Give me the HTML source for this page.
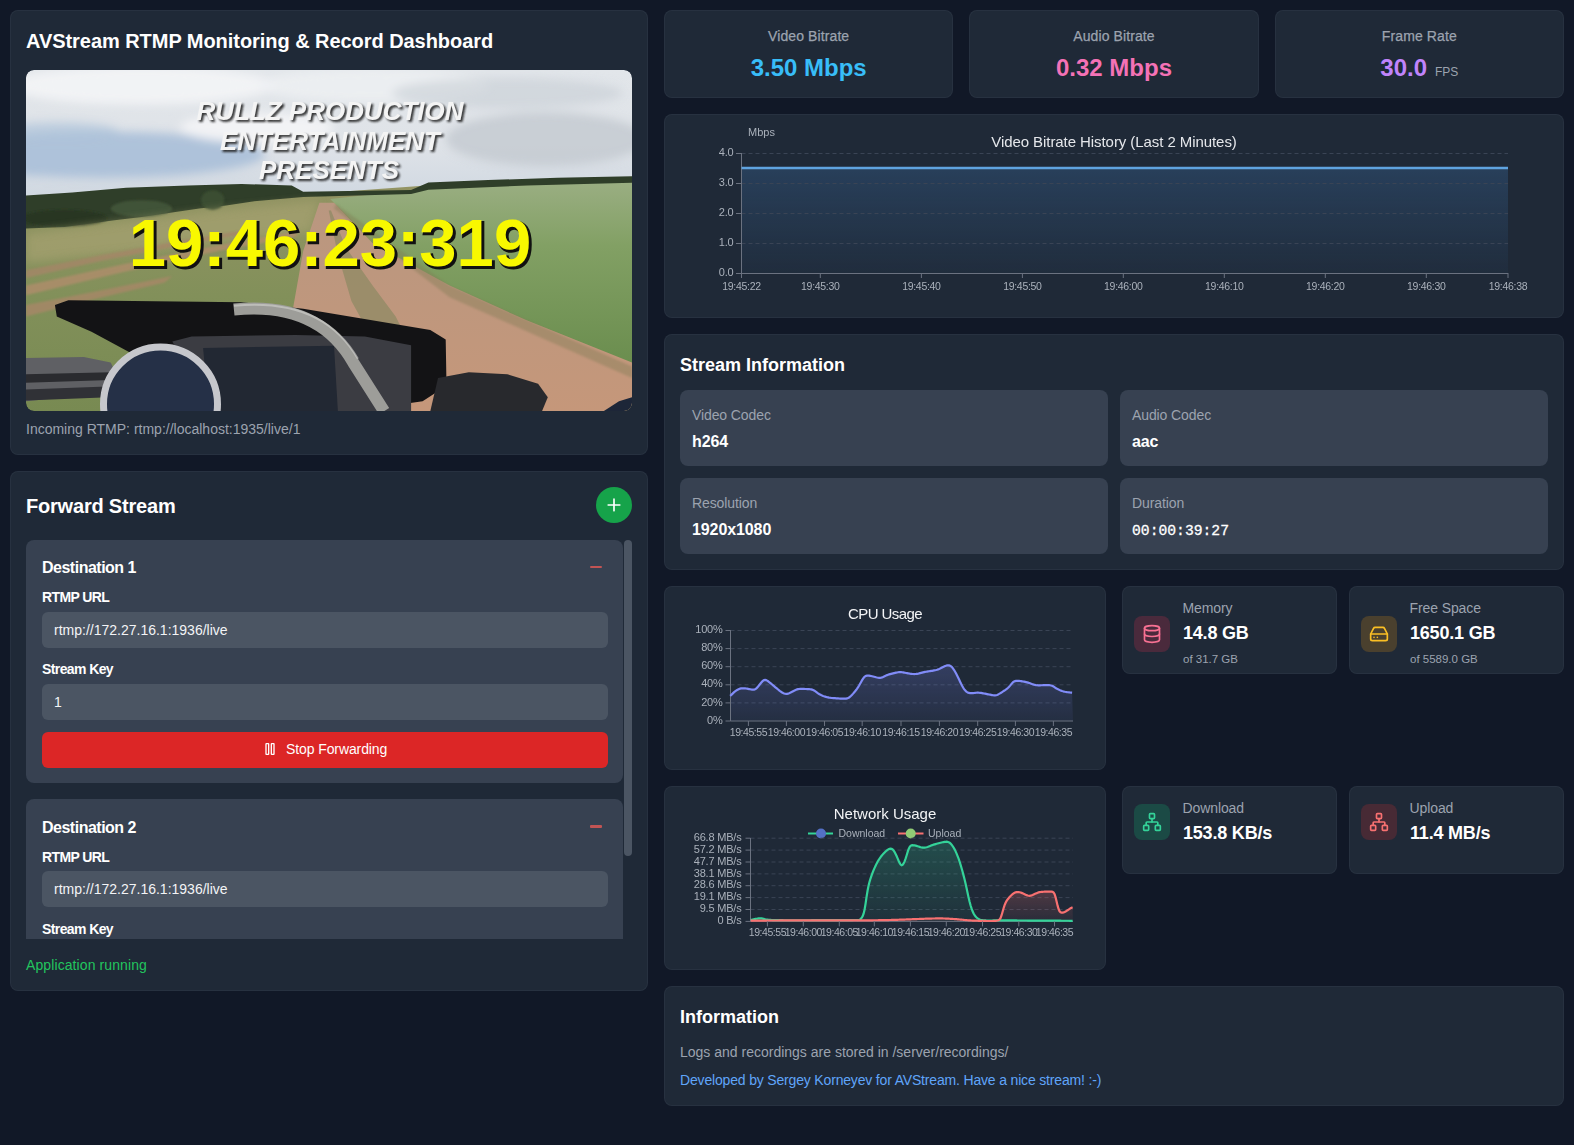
<!DOCTYPE html>
<html><head><meta charset="utf-8"><title>AVStream RTMP Monitoring &amp; Record Dashboard</title>
<style>
html,body{margin:0;padding:0;}
body{width:1574px;height:1145px;background:#111827;position:relative;overflow:hidden;font-family:'Liberation Sans', sans-serif;}
</style></head><body>
<div style="position:absolute;left:10px;top:10px;width:638px;height:445px;background:#1f2937;border-radius:8px;box-sizing:border-box;border:1px solid rgba(75,85,99,0.2);"></div>
<div style="position:absolute;left:10px;top:471px;width:638px;height:520px;background:#1f2937;border-radius:8px;box-sizing:border-box;border:1px solid rgba(75,85,99,0.2);"></div>
<div style="position:absolute;left:664.0px;top:10px;width:289.33px;height:88px;background:#1f2937;border-radius:8px;box-sizing:border-box;border:1px solid rgba(75,85,99,0.2);"></div>
<div style="position:absolute;left:969.33px;top:10px;width:289.33px;height:88px;background:#1f2937;border-radius:8px;box-sizing:border-box;border:1px solid rgba(75,85,99,0.2);"></div>
<div style="position:absolute;left:1274.67px;top:10px;width:289.33px;height:88px;background:#1f2937;border-radius:8px;box-sizing:border-box;border:1px solid rgba(75,85,99,0.2);"></div>
<div style="position:absolute;left:664px;top:114px;width:900px;height:204px;background:#1f2937;border-radius:8px;box-sizing:border-box;border:1px solid rgba(75,85,99,0.2);"></div>
<div style="position:absolute;left:664px;top:334px;width:900px;height:236px;background:#1f2937;border-radius:8px;box-sizing:border-box;border:1px solid rgba(75,85,99,0.2);"></div>
<div style="position:absolute;left:664px;top:586px;width:442px;height:184px;background:#1f2937;border-radius:8px;box-sizing:border-box;border:1px solid rgba(75,85,99,0.2);"></div>
<div style="position:absolute;left:1122px;top:586px;width:215px;height:88px;background:#1f2937;border-radius:8px;box-sizing:border-box;border:1px solid rgba(75,85,99,0.2);"></div>
<div style="position:absolute;left:1349px;top:586px;width:215px;height:88px;background:#1f2937;border-radius:8px;box-sizing:border-box;border:1px solid rgba(75,85,99,0.2);"></div>
<div style="position:absolute;left:664px;top:786px;width:442px;height:184px;background:#1f2937;border-radius:8px;box-sizing:border-box;border:1px solid rgba(75,85,99,0.2);"></div>
<div style="position:absolute;left:1122px;top:786px;width:215px;height:88px;background:#1f2937;border-radius:8px;box-sizing:border-box;border:1px solid rgba(75,85,99,0.2);"></div>
<div style="position:absolute;left:1349px;top:786px;width:215px;height:88px;background:#1f2937;border-radius:8px;box-sizing:border-box;border:1px solid rgba(75,85,99,0.2);"></div>
<div style="position:absolute;left:664px;top:986px;width:900px;height:120px;background:#1f2937;border-radius:8px;box-sizing:border-box;border:1px solid rgba(75,85,99,0.2);"></div>
<div style="position:absolute;top:31px;font-family:'Liberation Sans', sans-serif;font-size:20px;line-height:20px;font-weight:700;color:#ffffff;white-space:nowrap;letter-spacing:-0.05px;left:26px;">AVStream RTMP Monitoring &amp; Record Dashboard</div>
<svg style="position:absolute;left:26px;top:70px;border-radius:8px" width="606" height="341" viewBox="26 70 606 341" font-family="'Liberation Sans', sans-serif">
<defs>
<clipPath id="vclip"><rect x="26" y="70" width="606" height="341" rx="8" ry="8"/></clipPath>
<linearGradient id="sky" x1="0" y1="0" x2="0" y2="1">
 <stop offset="0" stop-color="#e2e6ea"/><stop offset="0.5" stop-color="#dfe3e8"/><stop offset="1" stop-color="#c9d3de"/></linearGradient>
<linearGradient id="fieldL" x1="0" y1="0" x2="0" y2="1">
 <stop offset="0" stop-color="#949464"/><stop offset="0.5" stop-color="#82905a"/><stop offset="1" stop-color="#788a52"/></linearGradient>
<linearGradient id="fieldR" x1="0" y1="0" x2="0" y2="1">
 <stop offset="0" stop-color="#9aae82"/><stop offset="0.35" stop-color="#82a064"/><stop offset="1" stop-color="#6a8d4e"/></linearGradient>
<linearGradient id="road" x1="0" y1="0" x2="0" y2="1">
 <stop offset="0" stop-color="#b99780"/><stop offset="1" stop-color="#c5977a"/></linearGradient>
<filter id="bl3" x="-30%" y="-30%" width="160%" height="160%"><feGaussianBlur stdDeviation="5"/></filter>
<filter id="bl1" x="-10%" y="-10%" width="120%" height="120%"><feGaussianBlur stdDeviation="1.2"/></filter>
<filter id="sh" x="-5%" y="-5%" width="110%" height="120%"><feGaussianBlur stdDeviation="0.8"/></filter>
</defs>
<g clip-path="url(#vclip)">
<rect x="26" y="70" width="606" height="150" fill="url(#sky)"/>
<g filter="url(#bl3)"><ellipse cx="103.01193685021178" cy="154.71313053523295" rx="161.72506738544473" ry="23.103581055063536" fill="#a9bfd8" opacity="0.9"/><ellipse cx="56.80477474008471" cy="131.60954948016942" rx="61.60954948016943" ry="9.626492106276473" fill="#aec3da" opacity="0.7"/><ellipse cx="141.51790527531767" cy="85.40238737004236" rx="134.77088948787062" ry="19.252984212552946" fill="#f3f4f6" opacity="0.9"/><ellipse cx="372.553715825953" cy="85.40238737004236" rx="115.51790527531767" ry="17.32768579129765" fill="#eef0f3" opacity="0.8"/><ellipse cx="545.8305737389295" cy="139.31074316519062" rx="100.11551790527533" ry="26.954177897574123" fill="#c3c9d0" opacity="0.8"/><ellipse cx="507.32460531382367" cy="93.10358105506353" rx="115.51790527531767" ry="15.402387370042357" fill="#c8ced5" opacity="0.6"/><ellipse cx="257.03581055063535" cy="127.75895263765884" rx="77.01193685021178" ry="15.402387370042357" fill="#f6f6f8" opacity="0.8"/></g>
<polygon points="26.0,224.0 295.5,195.1 426.5,185.5 632.1,179.7 632.1,411.2 26.0,411.2" fill="url(#fieldL)" />
<polygon points="330.2,199.0 426.5,188.6 632.1,181.7 632.1,366.5 526.6,322.2 449.6,287.6 384.1,251.0 336.0,204.8" fill="url(#fieldR)" />
<polygon points="26.0,195.5 72.2,192.4 126.1,187.8 187.7,185.5 241.6,184.0 291.7,185.5 303.2,191.7 411.1,190.1 428.4,182.4 488.1,180.1 557.4,177.8 632.1,176.3 632.1,182.8 526.6,185.5 428.4,189.8 411.1,194.0 303.2,197.1 257.0,200.9 226.2,205.5 199.3,208.6 141.5,217.1 114.6,220.2 64.5,227.1 26.0,228.6" fill="#2f3e29" />
<g filter="url(#bl1)"><ellipse cx="212.75394686176358" cy="200.1501732768579" rx="11.551790527531768" ry="10.011551790527532" fill="#3a4d30"/><ellipse cx="141.51790527531767" cy="208.6214863303812" rx="30.804774740084714" ry="8.471313053523296" fill="#46583c" opacity="0.8"/><ellipse cx="64.50596842510589" cy="218.2479784366577" rx="42.35656526761648" ry="8.471313053523296" fill="#253421" opacity="0.8"/></g>
<g filter="url(#bl3)" opacity="0.75"><polygon points="26.0,233.7 218.5,210.5 318.6,200.9 310.9,231.7 141.5,251.0 26.0,262.5" fill="#a4a070" /></g>
<g filter="url(#bl1)" opacity="0.8"><polygon points="26.0,285.6 122.3,264.5 218.5,245.2 295.5,231.7 297.5,236.3 218.5,251.0 122.3,272.2 26.0,295.3" fill="#b08d6c" /><polygon points="26.0,270.2 103.0,254.8 187.7,239.4 257.0,228.6 257.0,231.7 187.7,244.0 103.0,260.6 26.0,277.9" fill="#a58668" /><polygon points="26.0,304.9 95.3,291.4 172.3,276.0 164.6,282.6 95.3,299.1 26.0,316.4" fill="#a88768" /></g>
<polygon points="319.4,202.8 334.0,202.8 372.6,243.3 449.6,285.6 526.6,320.3 632.1,362.6 632.1,411.2 287.8,411.2 290.9,320.3 303.2,251.0" fill="url(#road)" />
<g opacity="0.75"><polygon points="328.7,210.5 331.0,210.5 345.6,247.1 372.6,285.6 395.7,316.4 411.1,347.2 372.6,339.5 351.4,301.0 337.9,254.8" fill="#8f8a64" /></g>
<g opacity="0.4" filter="url(#bl1)"><polygon points="336.0,204.0 449.6,285.6 632.1,366.5 632.1,378.0 449.6,297.2 334.0,208.6" fill="#807c54" /></g>
<polygon points="54.9,304.9 68.4,300.3 241.6,302.2 303.2,308.7 430.3,329.9 445.7,339.5 446.5,385.7 422.6,401.2 353.3,411.2 153.1,411.2 141.5,358.8 91.5,331.8 56.8,316.4" fill="#131315" />
<polygon points="26.0,358.0 83.8,356.9 110.7,362.6 118.4,378.0 110.7,393.5 83.8,395.4 26.0,401.2" fill="#5f6064" />
<polygon points="26.0,374.2 110.7,372.3 110.7,380.0 26.0,382.7" fill="#2a2b2f" />
<polygon points="26.0,389.6 106.9,386.5 108.8,397.3 26.0,400.4" fill="#303136" />
<polygon points="172.3,341.5 191.6,336.5 295.5,334.9 364.9,336.5 411.1,345.3 411.1,411.2 210.8,411.2" fill="#3b3c42" />
<polygon points="203.1,348.0 334.0,345.7 337.9,411.2 208.9,411.2" fill="#222833" />
<ellipse cx="160.5" cy="404" rx="57" ry="57" fill="#253047" stroke="#c6c7cc" stroke-width="7"/>
<path d="M233.9,309.5 Q318.6,301.0 353.3,362.6 L384.1,411.2" fill="none" stroke="#9d9d99" stroke-width="12"/>
<path d="M233.9,305.7 Q322.5,297.2 357.9,358.8" fill="none" stroke="#d2d2ce" stroke-width="2" opacity="0.6"/>
<polygon points="438.0,378.0 468.8,372.3 507.3,374.2 538.1,383.8 547.8,397.3 542.0,411.2 430.3,411.2" fill="#28292d" />
<polygon points="603.6,411.2 619.0,401.2 632.1,397.3 632.1,411.2" fill="#1d2638" />
<text x="332.0" y="121.5" font-size="26" font-weight="700" font-style="italic" fill="#1a1a1a" text-anchor="middle" filter="url(#sh)" opacity="0.9">RULLZ PRODUCTION</text><text x="330" y="119.5" font-size="26" font-weight="700" font-style="italic" fill="#f4f4f4" text-anchor="middle">RULLZ PRODUCTION</text>
<text x="332.0" y="151.5" font-size="26" font-weight="700" font-style="italic" fill="#1a1a1a" text-anchor="middle" filter="url(#sh)" opacity="0.9">ENTERTAINMENT</text><text x="330" y="149.5" font-size="26" font-weight="700" font-style="italic" fill="#f4f4f4" text-anchor="middle">ENTERTAINMENT</text>
<text x="331.0" y="181.0" font-size="26" font-weight="700" font-style="italic" fill="#1a1a1a" text-anchor="middle" filter="url(#sh)" opacity="0.9">PRESENTS</text><text x="329" y="179" font-size="26" font-weight="700" font-style="italic" fill="#f4f4f4" text-anchor="middle">PRESENTS</text>
<text x="332" y="268" font-size="67" font-weight="700" fill="#111" text-anchor="middle" stroke="#111" stroke-width="2">19:46:23:319</text>
<text x="330" y="266" font-size="67" font-weight="700" fill="#f8f800" text-anchor="middle">19:46:23:319</text>
</g></svg>
<div style="position:absolute;top:422px;font-family:'Liberation Sans', sans-serif;font-size:14px;line-height:14px;font-weight:400;color:#9ca3af;white-space:nowrap;left:26px;">Incoming RTMP: rtmp://localhost:1935/live/1</div>
<div style="position:absolute;top:496px;font-family:'Liberation Sans', sans-serif;font-size:20px;line-height:20px;font-weight:700;color:#ffffff;white-space:nowrap;letter-spacing:-0.2px;left:26px;">Forward Stream</div>
<div style="position:absolute;left:596px;top:487px;width:36px;height:36px;border-radius:50%;background:#16a34a;"></div>
<svg style="position:absolute;left:604px;top:495px" width="20" height="20" viewBox="0 0 24 24" fill="none" stroke="#fff" stroke-width="2" stroke-linecap="round"><path d="M5 12h14M12 5v14"/></svg>
<div style="position:absolute;left:26px;top:539px;width:606px;height:400px;overflow:hidden;">
<div style="position:absolute;left:0px;top:0.5px;width:597px;height:243px;background:#374151;border-radius:8px;"></div>
<div style="position:absolute;left:16px;top:21.0px;font-family:'Liberation Sans', sans-serif;font-size:16px;line-height:16px;font-weight:700;color:#ffffff;white-space:nowrap;letter-spacing:-0.5px">Destination 1</div>
<div style="position:absolute;left:564px;top:26.5px;width:12px;height:2.5px;background:#c25454;border-radius:1px;"></div>
<div style="position:absolute;left:16px;top:51.0px;font-family:'Liberation Sans', sans-serif;font-size:14px;line-height:14px;font-weight:700;color:#ffffff;white-space:nowrap;letter-spacing:-0.6px">RTMP URL</div>
<div style="position:absolute;left:16px;top:72.5px;width:566px;height:36px;background:#4b5563;border-radius:6px;"></div>
<div style="position:absolute;left:28px;top:83.5px;font-family:'Liberation Sans', sans-serif;font-size:14px;line-height:14px;font-weight:400;color:#f3f4f6;white-space:nowrap;letter-spacing:0px">rtmp://172.27.16.1:1936/live</div>
<div style="position:absolute;left:16px;top:123.0px;font-family:'Liberation Sans', sans-serif;font-size:14px;line-height:14px;font-weight:700;color:#ffffff;white-space:nowrap;letter-spacing:-0.6px">Stream Key</div>
<div style="position:absolute;left:16px;top:144.5px;width:566px;height:36px;background:#4b5563;border-radius:6px;"></div>
<div style="position:absolute;left:28px;top:155.5px;font-family:'Liberation Sans', sans-serif;font-size:14px;line-height:14px;font-weight:400;color:#f3f4f6;white-space:nowrap;letter-spacing:0px">1</div>
<div style="position:absolute;left:16px;top:192.5px;width:566px;height:36px;background:#dc2626;border-radius:6px;"></div>
<svg style="position:absolute;left:236px;top:202.0px" width="16" height="16" viewBox="0 0 24 24" fill="none" stroke="#fff" stroke-width="2" stroke-linecap="round" stroke-linejoin="round"><rect x="6" y="4" width="4" height="16" rx="0.5"/><rect x="14" y="4" width="4" height="16" rx="0.5"/></svg>
<div style="position:absolute;left:260px;top:203.0px;font-family:'Liberation Sans', sans-serif;font-size:14px;line-height:14px;font-weight:400;color:#fff;white-space:nowrap;letter-spacing:-0.1px">Stop Forwarding</div>
<div style="position:absolute;left:0px;top:260px;width:597px;height:243px;background:#374151;border-radius:8px;"></div>
<div style="position:absolute;left:16px;top:280.5px;font-family:'Liberation Sans', sans-serif;font-size:16px;line-height:16px;font-weight:700;color:#ffffff;white-space:nowrap;letter-spacing:-0.5px">Destination 2</div>
<div style="position:absolute;left:564px;top:286px;width:12px;height:2.5px;background:#c25454;border-radius:1px;"></div>
<div style="position:absolute;left:16px;top:310.5px;font-family:'Liberation Sans', sans-serif;font-size:14px;line-height:14px;font-weight:700;color:#ffffff;white-space:nowrap;letter-spacing:-0.6px">RTMP URL</div>
<div style="position:absolute;left:16px;top:332px;width:566px;height:36px;background:#4b5563;border-radius:6px;"></div>
<div style="position:absolute;left:28px;top:343px;font-family:'Liberation Sans', sans-serif;font-size:14px;line-height:14px;font-weight:400;color:#f3f4f6;white-space:nowrap;letter-spacing:0px">rtmp://172.27.16.1:1936/live</div>
<div style="position:absolute;left:16px;top:382.5px;font-family:'Liberation Sans', sans-serif;font-size:14px;line-height:14px;font-weight:700;color:#ffffff;white-space:nowrap;letter-spacing:-0.6px">Stream Key</div>
<div style="position:absolute;left:16px;top:404px;width:566px;height:36px;background:#4b5563;border-radius:6px;"></div>
<div style="position:absolute;left:28px;top:415px;font-family:'Liberation Sans', sans-serif;font-size:14px;line-height:14px;font-weight:400;color:#f3f4f6;white-space:nowrap;letter-spacing:0px">1</div>
<div style="position:absolute;left:16px;top:452px;width:566px;height:36px;background:#dc2626;border-radius:6px;"></div>
<svg style="position:absolute;left:236px;top:461.5px" width="16" height="16" viewBox="0 0 24 24" fill="none" stroke="#fff" stroke-width="2" stroke-linecap="round" stroke-linejoin="round"><rect x="6" y="4" width="4" height="16" rx="0.5"/><rect x="14" y="4" width="4" height="16" rx="0.5"/></svg>
<div style="position:absolute;left:260px;top:462.5px;font-family:'Liberation Sans', sans-serif;font-size:14px;line-height:14px;font-weight:400;color:#fff;white-space:nowrap;letter-spacing:-0.1px">Stop Forwarding</div>
<div style="position:absolute;left:598px;top:0.5px;width:8px;height:316px;border-radius:4px;background:#4b5563;"></div>
</div>
<div style="position:absolute;top:958px;font-family:'Liberation Sans', sans-serif;font-size:14px;line-height:14px;font-weight:400;color:#22c55e;white-space:nowrap;letter-spacing:0.1px;left:26px;">Application running</div>
<div style="position:absolute;top:29px;font-family:'Liberation Sans', sans-serif;font-size:14px;line-height:14px;font-weight:500;color:#9ca3af;white-space:nowrap;letter-spacing:0.1px;left:708.6665px;width:200px;text-align:center;-webkit-text-stroke:0.25px #9ca3af;">Video Bitrate</div>
<div style="position:absolute;top:29px;font-family:'Liberation Sans', sans-serif;font-size:14px;line-height:14px;font-weight:500;color:#9ca3af;white-space:nowrap;letter-spacing:0.1px;left:1013.9995000000001px;width:200px;text-align:center;-webkit-text-stroke:0.25px #9ca3af;">Audio Bitrate</div>
<div style="position:absolute;top:29px;font-family:'Liberation Sans', sans-serif;font-size:14px;line-height:14px;font-weight:500;color:#9ca3af;white-space:nowrap;letter-spacing:0.1px;left:1319.3325000000002px;width:200px;text-align:center;-webkit-text-stroke:0.25px #9ca3af;">Frame Rate</div>
<div style="position:absolute;top:56px;font-family:'Liberation Sans', sans-serif;font-size:24px;line-height:24px;font-weight:700;color:#38bdf8;white-space:nowrap;left:678.6665px;width:260px;text-align:center;">3.50 Mbps</div>
<div style="position:absolute;top:56px;font-family:'Liberation Sans', sans-serif;font-size:24px;line-height:24px;font-weight:700;color:#f472b6;white-space:nowrap;left:983.9995000000001px;width:260px;text-align:center;">0.32 Mbps</div>
<div style="position:absolute;left:1289.3325000000002px;top:56px;width:260px;text-align:center;white-space:nowrap;font-family:'Liberation Sans', sans-serif;line-height:24px"><span style="font-size:24px;font-weight:700;color:#c084fc">30.0</span><span style="font-size:12px;color:#9ca3af;margin-left:8px">FPS</span></div>
<div style="position:absolute;top:356px;font-family:'Liberation Sans', sans-serif;font-size:18px;line-height:18px;font-weight:700;color:#ffffff;white-space:nowrap;left:680px;">Stream Information</div>
<div style="position:absolute;left:680px;top:390px;width:428px;height:76px;background:#374151;border-radius:8px;"></div>
<div style="position:absolute;top:408px;font-family:'Liberation Sans', sans-serif;font-size:14px;line-height:14px;font-weight:400;color:#9ca3af;white-space:nowrap;letter-spacing:-0.1px;left:692px;">Video Codec</div>
<div style="position:absolute;top:434px;font-family:'Liberation Sans', sans-serif;font-size:16px;line-height:16px;font-weight:700;color:#ffffff;white-space:nowrap;letter-spacing:-0.1px;left:692px;">h264</div>
<div style="position:absolute;left:1120px;top:390px;width:428px;height:76px;background:#374151;border-radius:8px;"></div>
<div style="position:absolute;top:408px;font-family:'Liberation Sans', sans-serif;font-size:14px;line-height:14px;font-weight:400;color:#9ca3af;white-space:nowrap;letter-spacing:-0.1px;left:1132px;">Audio Codec</div>
<div style="position:absolute;top:434px;font-family:'Liberation Sans', sans-serif;font-size:16px;line-height:16px;font-weight:700;color:#ffffff;white-space:nowrap;letter-spacing:-0.1px;left:1132px;">aac</div>
<div style="position:absolute;left:680px;top:478px;width:428px;height:76px;background:#374151;border-radius:8px;"></div>
<div style="position:absolute;top:496px;font-family:'Liberation Sans', sans-serif;font-size:14px;line-height:14px;font-weight:400;color:#9ca3af;white-space:nowrap;letter-spacing:-0.1px;left:692px;">Resolution</div>
<div style="position:absolute;top:522px;font-family:'Liberation Sans', sans-serif;font-size:16px;line-height:16px;font-weight:700;color:#ffffff;white-space:nowrap;letter-spacing:-0.1px;left:692px;">1920x1080</div>
<div style="position:absolute;left:1120px;top:478px;width:428px;height:76px;background:#374151;border-radius:8px;"></div>
<div style="position:absolute;top:496px;font-family:'Liberation Sans', sans-serif;font-size:14px;line-height:14px;font-weight:400;color:#9ca3af;white-space:nowrap;letter-spacing:-0.1px;left:1132px;">Duration</div>
<div style="position:absolute;top:524px;font-family:'Liberation Mono', monospace;font-size:14.7px;line-height:14.7px;font-weight:400;color:#ffffff;white-space:nowrap;left:1132px;-webkit-text-stroke:0.3px #fff;">00:00:39:27</div>
<div style="position:absolute;top:1008px;font-family:'Liberation Sans', sans-serif;font-size:18px;line-height:18px;font-weight:700;color:#ffffff;white-space:nowrap;left:680px;">Information</div>
<div style="position:absolute;top:1045px;font-family:'Liberation Sans', sans-serif;font-size:14px;line-height:14px;font-weight:400;color:#9ca3af;white-space:nowrap;left:680px;">Logs and recordings are stored in /server/recordings/</div>
<div style="position:absolute;top:1073px;font-family:'Liberation Sans', sans-serif;font-size:14px;line-height:14px;font-weight:400;color:#60a5fa;white-space:nowrap;letter-spacing:-0.17px;left:680px;">Developed by Sergey Korneyev for AVStream. Have a nice stream! :-)</div>
<div style="position:absolute;left:1134px;top:616px;width:36px;height:36px;background:#4a2a3c;border-radius:8px;"></div>
<svg style="position:absolute;left:1142px;top:624px" width="20" height="20" viewBox="0 0 24 24" fill="none" stroke="#f87193" stroke-width="2" stroke-linecap="round" stroke-linejoin="round"><ellipse cx="12" cy="5" rx="9" ry="3"/><path d="M3 5V19A9 3 0 0 0 21 19V5"/><path d="M3 12A9 3 0 0 0 21 12"/></svg>
<div style="position:absolute;top:601px;font-family:'Liberation Sans', sans-serif;font-size:14px;line-height:14px;font-weight:400;color:#9ca3af;white-space:nowrap;letter-spacing:-0.1px;left:1182.5px;">Memory</div>
<div style="position:absolute;top:623.6px;font-family:'Liberation Sans', sans-serif;font-size:18px;line-height:18px;font-weight:700;color:#ffffff;white-space:nowrap;letter-spacing:-0.2px;left:1183px;">14.8 GB</div>
<div style="position:absolute;top:654px;font-family:'Liberation Sans', sans-serif;font-size:11.5px;line-height:11.5px;font-weight:400;color:#9ca3af;white-space:nowrap;left:1183px;">of 31.7 GB</div>
<div style="position:absolute;left:1361px;top:616px;width:36px;height:36px;background:#4a402e;border-radius:8px;"></div>
<svg style="position:absolute;left:1369px;top:624px" width="20" height="20" viewBox="0 0 24 24" fill="none" stroke="#fbbf24" stroke-width="2" stroke-linecap="round" stroke-linejoin="round"><line x1="22" y1="12" x2="2" y2="12"/><path d="M5.45 5.11 2 12v6a2 2 0 0 0 2 2h16a2 2 0 0 0 2-2v-6l-3.45-6.89A2 2 0 0 0 16.76 4H7.24a2 2 0 0 0-1.79 1.11z"/><line x1="6" y1="16" x2="6.01" y2="16"/><line x1="10" y1="16" x2="10.01" y2="16"/></svg>
<div style="position:absolute;top:601px;font-family:'Liberation Sans', sans-serif;font-size:14px;line-height:14px;font-weight:400;color:#9ca3af;white-space:nowrap;letter-spacing:-0.1px;left:1409.5px;">Free Space</div>
<div style="position:absolute;top:623.6px;font-family:'Liberation Sans', sans-serif;font-size:18px;line-height:18px;font-weight:700;color:#ffffff;white-space:nowrap;letter-spacing:-0.2px;left:1410px;">1650.1 GB</div>
<div style="position:absolute;top:654px;font-family:'Liberation Sans', sans-serif;font-size:11.5px;line-height:11.5px;font-weight:400;color:#9ca3af;white-space:nowrap;left:1410px;">of 5589.0 GB</div>
<div style="position:absolute;left:1134px;top:804px;width:36px;height:36px;background:#1b4a45;border-radius:8px;"></div>
<svg style="position:absolute;left:1142px;top:812px" width="20" height="20" viewBox="0 0 24 24" fill="none" stroke="#34d399" stroke-width="2" stroke-linecap="round" stroke-linejoin="round"><rect x="16" y="16" width="6" height="6" rx="1"/><rect x="2" y="16" width="6" height="6" rx="1"/><rect x="9" y="2" width="6" height="6" rx="1"/><path d="M5 16v-3a1 1 0 0 1 1-1h12a1 1 0 0 1 1 1v3"/><path d="M12 12V8"/></svg>
<div style="position:absolute;top:801px;font-family:'Liberation Sans', sans-serif;font-size:14px;line-height:14px;font-weight:400;color:#9ca3af;white-space:nowrap;letter-spacing:-0.1px;left:1182.5px;">Download</div>
<div style="position:absolute;top:823.6px;font-family:'Liberation Sans', sans-serif;font-size:18px;line-height:18px;font-weight:700;color:#ffffff;white-space:nowrap;letter-spacing:-0.2px;left:1183px;">153.8 KB/s</div>
<div style="position:absolute;left:1361px;top:804px;width:36px;height:36px;background:#472a35;border-radius:8px;"></div>
<svg style="position:absolute;left:1369px;top:812px" width="20" height="20" viewBox="0 0 24 24" fill="none" stroke="#f87171" stroke-width="2" stroke-linecap="round" stroke-linejoin="round"><rect x="16" y="16" width="6" height="6" rx="1"/><rect x="2" y="16" width="6" height="6" rx="1"/><rect x="9" y="2" width="6" height="6" rx="1"/><path d="M5 16v-3a1 1 0 0 1 1-1h12a1 1 0 0 1 1 1v3"/><path d="M12 12V8"/></svg>
<div style="position:absolute;top:801px;font-family:'Liberation Sans', sans-serif;font-size:14px;line-height:14px;font-weight:400;color:#9ca3af;white-space:nowrap;letter-spacing:-0.1px;left:1409.5px;">Upload</div>
<div style="position:absolute;top:823.6px;font-family:'Liberation Sans', sans-serif;font-size:18px;line-height:18px;font-weight:700;color:#ffffff;white-space:nowrap;letter-spacing:-0.2px;left:1410px;">11.4 MB/s</div>
<svg style="position:absolute;left:0;top:0" width="1574" height="1145" viewBox="0 0 1574 1145" font-family="'Liberation Sans', sans-serif">
<defs><linearGradient id="gb" x1="0" y1="0" x2="0" y2="1"><stop offset="0" stop-color="#4a90d9" stop-opacity="0.22"/><stop offset="1" stop-color="#4a90d9" stop-opacity="0.04"/></linearGradient><linearGradient id="gc" x1="0" y1="0" x2="0" y2="1"><stop offset="0" stop-color="#818cf8" stop-opacity="0.22"/><stop offset="1" stop-color="#818cf8" stop-opacity="0.06"/></linearGradient><linearGradient id="gd" x1="0" y1="0" x2="0" y2="1"><stop offset="0" stop-color="#34d399" stop-opacity="0.22"/><stop offset="1" stop-color="#34d399" stop-opacity="0.05"/></linearGradient><linearGradient id="gu" x1="0" y1="0" x2="0" y2="1"><stop offset="0" stop-color="#f87171" stop-opacity="0.22"/><stop offset="1" stop-color="#f87171" stop-opacity="0.05"/></linearGradient></defs>
<text x="1114" y="147" font-size="15" fill="#e5e7eb" text-anchor="middle" font-weight="400" letter-spacing="-0.07">Video Bitrate History (Last 2 Minutes)</text>
<text x="748" y="135.5" font-size="11" fill="#aab1bb" text-anchor="start" font-weight="400" letter-spacing="0">Mbps</text>
<path d="M741.5,168 H1508 V273 H741.5 Z" fill="url(#gb)"/>
<line x1="741.5" y1="153.5" x2="1508" y2="153.5" stroke="#3a4455" stroke-dasharray="4 3"/>
<line x1="741.5" y1="183.5" x2="1508" y2="183.5" stroke="#3a4455" stroke-dasharray="4 3"/>
<line x1="741.5" y1="213.5" x2="1508" y2="213.5" stroke="#3a4455" stroke-dasharray="4 3"/>
<line x1="741.5" y1="243.5" x2="1508" y2="243.5" stroke="#3a4455" stroke-dasharray="4 3"/>
<line x1="736" y1="153.5" x2="741.5" y2="153.5" stroke="#6b7280"/>
<text x="733.5" y="156" font-size="11" fill="#aab1bb" text-anchor="end" font-weight="400" letter-spacing="-0.2">4.0</text>
<line x1="736" y1="183.5" x2="741.5" y2="183.5" stroke="#6b7280"/>
<text x="733.5" y="186" font-size="11" fill="#aab1bb" text-anchor="end" font-weight="400" letter-spacing="-0.2">3.0</text>
<line x1="736" y1="213.5" x2="741.5" y2="213.5" stroke="#6b7280"/>
<text x="733.5" y="216" font-size="11" fill="#aab1bb" text-anchor="end" font-weight="400" letter-spacing="-0.2">2.0</text>
<line x1="736" y1="243.5" x2="741.5" y2="243.5" stroke="#6b7280"/>
<text x="733.5" y="246" font-size="11" fill="#aab1bb" text-anchor="end" font-weight="400" letter-spacing="-0.2">1.0</text>
<line x1="736" y1="273.5" x2="741.5" y2="273.5" stroke="#6b7280"/>
<text x="733.5" y="276" font-size="11" fill="#aab1bb" text-anchor="end" font-weight="400" letter-spacing="-0.2">0.0</text>
<line x1="741.5" y1="153" x2="741.5" y2="273" stroke="#6b7280"/>
<line x1="741.5" y1="273.5" x2="1508" y2="273.5" stroke="#6b7280"/>
<line x1="741.5" y1="168" x2="1508" y2="168" stroke="#5fa3e0" stroke-width="2.5"/>
<line x1="741.5" y1="273" x2="741.5" y2="278" stroke="#6b7280"/>
<text x="741.5" y="289.5" font-size="10.5" fill="#aab1bb" text-anchor="middle" font-weight="400" letter-spacing="-0.3">19:45:22</text>
<line x1="820.3" y1="273" x2="820.3" y2="278" stroke="#6b7280"/>
<text x="820.3" y="289.5" font-size="10.5" fill="#aab1bb" text-anchor="middle" font-weight="400" letter-spacing="-0.3">19:45:30</text>
<line x1="921.4" y1="273" x2="921.4" y2="278" stroke="#6b7280"/>
<text x="921.4" y="289.5" font-size="10.5" fill="#aab1bb" text-anchor="middle" font-weight="400" letter-spacing="-0.3">19:45:40</text>
<line x1="1022.4" y1="273" x2="1022.4" y2="278" stroke="#6b7280"/>
<text x="1022.4" y="289.5" font-size="10.5" fill="#aab1bb" text-anchor="middle" font-weight="400" letter-spacing="-0.3">19:45:50</text>
<line x1="1123.3" y1="273" x2="1123.3" y2="278" stroke="#6b7280"/>
<text x="1123.3" y="289.5" font-size="10.5" fill="#aab1bb" text-anchor="middle" font-weight="400" letter-spacing="-0.3">19:46:00</text>
<line x1="1224.3" y1="273" x2="1224.3" y2="278" stroke="#6b7280"/>
<text x="1224.3" y="289.5" font-size="10.5" fill="#aab1bb" text-anchor="middle" font-weight="400" letter-spacing="-0.3">19:46:10</text>
<line x1="1325.3" y1="273" x2="1325.3" y2="278" stroke="#6b7280"/>
<text x="1325.3" y="289.5" font-size="10.5" fill="#aab1bb" text-anchor="middle" font-weight="400" letter-spacing="-0.3">19:46:20</text>
<line x1="1426.3" y1="273" x2="1426.3" y2="278" stroke="#6b7280"/>
<text x="1426.3" y="289.5" font-size="10.5" fill="#aab1bb" text-anchor="middle" font-weight="400" letter-spacing="-0.3">19:46:30</text>
<line x1="1508" y1="273" x2="1508" y2="278" stroke="#6b7280"/>
<text x="1508" y="289.5" font-size="10.5" fill="#aab1bb" text-anchor="middle" font-weight="400" letter-spacing="-0.3">19:46:38</text>
<text x="885" y="619" font-size="15" fill="#f3f4f6" text-anchor="middle" font-weight="400" letter-spacing="-0.6">CPU Usage</text>
<line x1="730.5" y1="630.5" x2="1073" y2="630.5" stroke="#3a4455" stroke-dasharray="4 3"/>
<line x1="730.5" y1="648.6" x2="1073" y2="648.6" stroke="#3a4455" stroke-dasharray="4 3"/>
<line x1="730.5" y1="666.7" x2="1073" y2="666.7" stroke="#3a4455" stroke-dasharray="4 3"/>
<line x1="730.5" y1="684.8" x2="1073" y2="684.8" stroke="#3a4455" stroke-dasharray="4 3"/>
<line x1="730.5" y1="702.9" x2="1073" y2="702.9" stroke="#3a4455" stroke-dasharray="4 3"/>
<line x1="725.5" y1="630.5" x2="730.5" y2="630.5" stroke="#6b7280"/>
<text x="722.5" y="633.1" font-size="11" fill="#aab1bb" text-anchor="end" font-weight="400" letter-spacing="-0.25">100%</text>
<line x1="725.5" y1="648.6" x2="730.5" y2="648.6" stroke="#6b7280"/>
<text x="722.5" y="651.2" font-size="11" fill="#aab1bb" text-anchor="end" font-weight="400" letter-spacing="-0.25">80%</text>
<line x1="725.5" y1="666.7" x2="730.5" y2="666.7" stroke="#6b7280"/>
<text x="722.5" y="669.3000000000001" font-size="11" fill="#aab1bb" text-anchor="end" font-weight="400" letter-spacing="-0.25">60%</text>
<line x1="725.5" y1="684.8" x2="730.5" y2="684.8" stroke="#6b7280"/>
<text x="722.5" y="687.4" font-size="11" fill="#aab1bb" text-anchor="end" font-weight="400" letter-spacing="-0.25">40%</text>
<line x1="725.5" y1="702.9" x2="730.5" y2="702.9" stroke="#6b7280"/>
<text x="722.5" y="705.5" font-size="11" fill="#aab1bb" text-anchor="end" font-weight="400" letter-spacing="-0.25">20%</text>
<line x1="725.5" y1="721" x2="730.5" y2="721" stroke="#6b7280"/>
<text x="722.5" y="723.6" font-size="11" fill="#aab1bb" text-anchor="end" font-weight="400" letter-spacing="-0.25">0%</text>
<path d="M730.10,695.84 L731.10,695.08 L732.10,694.12 L733.10,693.12 L734.10,692.18 L735.10,691.35 L736.10,690.63 L737.10,690.00 L738.10,689.47 L739.10,689.02 L740.10,688.68 L741.10,688.45 L742.10,688.33 L743.10,688.29 L744.10,688.32 L745.10,688.40 L746.10,688.51 L747.10,688.66 L748.10,688.85 L749.10,689.05 L750.10,689.25 L751.10,689.44 L752.10,689.59 L753.10,689.65 L754.10,689.57 L755.10,689.23 L756.10,688.58 L757.10,687.63 L758.10,686.46 L759.10,685.22 L760.10,683.97 L761.10,682.76 L762.10,681.65 L763.10,680.75 L764.10,680.15 L765.10,679.94 L766.10,680.11 L767.10,680.59 L768.10,681.25 L769.10,682.02 L770.10,682.83 L771.10,683.67 L772.10,684.52 L773.10,685.37 L774.10,686.21 L775.10,687.04 L776.10,687.87 L777.10,688.70 L778.10,689.52 L779.10,690.31 L780.10,691.08 L781.10,691.79 L782.10,692.44 L783.10,693.01 L784.10,693.47 L785.10,693.78 L786.10,693.93 L787.10,693.90 L788.10,693.69 L789.10,693.33 L790.10,692.86 L791.10,692.32 L792.10,691.76 L793.10,691.21 L794.10,690.68 L795.10,690.19 L796.10,689.76 L797.10,689.40 L798.10,689.15 L799.10,688.98 L800.10,688.90 L801.10,688.87 L802.10,688.87 L803.10,688.90 L804.10,688.94 L805.10,688.98 L806.10,689.02 L807.10,689.05 L808.10,689.09 L809.10,689.14 L810.10,689.24 L811.10,689.39 L812.10,689.63 L813.10,689.99 L814.10,690.47 L815.10,691.09 L816.10,691.80 L817.10,692.56 L818.10,693.31 L819.10,693.99 L820.10,694.58 L821.10,695.09 L822.10,695.54 L823.10,695.93 L824.10,696.28 L825.10,696.60 L826.10,696.90 L827.10,697.17 L828.10,697.40 L829.10,697.61 L830.10,697.77 L831.10,697.90 L832.10,698.00 L833.10,698.08 L834.10,698.15 L835.10,698.22 L836.10,698.29 L837.10,698.36 L838.10,698.43 L839.10,698.49 L840.10,698.55 L841.10,698.61 L842.10,698.65 L843.10,698.68 L844.10,698.70 L845.10,698.69 L846.10,698.63 L847.10,698.45 L848.10,698.09 L849.10,697.50 L850.10,696.69 L851.10,695.75 L852.10,694.72 L853.10,693.63 L854.10,692.49 L855.10,691.30 L856.10,690.03 L857.10,688.67 L858.10,687.17 L859.10,685.53 L860.10,683.76 L861.10,681.93 L862.10,680.15 L863.10,678.55 L864.10,677.25 L865.10,676.34 L866.10,675.81 L867.10,675.59 L868.10,675.57 L869.10,675.66 L870.10,675.81 L871.10,676.01 L872.10,676.23 L873.10,676.47 L874.10,676.73 L875.10,676.99 L876.10,677.27 L877.10,677.52 L878.10,677.73 L879.10,677.84 L880.10,677.83 L881.10,677.68 L882.10,677.39 L883.10,676.98 L884.10,676.50 L885.10,676.00 L886.10,675.52 L887.10,675.10 L888.10,674.73 L889.10,674.41 L890.10,674.12 L891.10,673.85 L892.10,673.60 L893.10,673.36 L894.10,673.13 L895.10,672.90 L896.10,672.68 L897.10,672.46 L898.10,672.28 L899.10,672.17 L900.10,672.13 L901.10,672.18 L902.10,672.28 L903.10,672.43 L904.10,672.60 L905.10,672.79 L906.10,672.98 L907.10,673.17 L908.10,673.35 L909.10,673.53 L910.10,673.69 L911.10,673.82 L912.10,673.93 L913.10,674.00 L914.10,674.03 L915.10,674.00 L916.10,673.93 L917.10,673.80 L918.10,673.62 L919.10,673.41 L920.10,673.17 L921.10,672.91 L922.10,672.65 L923.10,672.40 L924.10,672.17 L925.10,671.95 L926.10,671.76 L927.10,671.59 L928.10,671.42 L929.10,671.27 L930.10,671.12 L931.10,670.96 L932.10,670.80 L933.10,670.63 L934.10,670.44 L935.10,670.23 L936.10,669.98 L937.10,669.69 L938.10,669.35 L939.10,668.96 L940.10,668.52 L941.10,668.03 L942.10,667.52 L943.10,667.01 L944.10,666.51 L945.10,666.06 L946.10,665.68 L947.10,665.42 L948.10,665.31 L949.10,665.39 L950.10,665.73 L951.10,666.36 L952.10,667.30 L953.10,668.54 L954.10,670.03 L955.10,671.71 L956.10,673.51 L957.10,675.44 L958.10,677.47 L959.10,679.58 L960.10,681.71 L961.10,683.79 L962.10,685.74 L963.10,687.52 L964.10,689.06 L965.10,690.35 L966.10,691.36 L967.10,692.11 L968.10,692.62 L969.10,692.94 L970.10,693.11 L971.10,693.17 L972.10,693.15 L973.10,693.08 L974.10,692.98 L975.10,692.87 L976.10,692.77 L977.10,692.71 L978.10,692.70 L979.10,692.74 L980.10,692.83 L981.10,692.96 L982.10,693.12 L983.10,693.30 L984.10,693.49 L985.10,693.69 L986.10,693.89 L987.10,694.09 L988.10,694.30 L989.10,694.50 L990.10,694.70 L991.10,694.90 L992.10,695.08 L993.10,695.24 L994.10,695.36 L995.10,695.38 L996.10,695.25 L997.10,694.93 L998.10,694.47 L999.10,693.92 L1000.10,693.32 L1001.10,692.71 L1002.10,692.07 L1003.10,691.43 L1004.10,690.76 L1005.10,690.08 L1006.10,689.36 L1007.10,688.60 L1008.10,687.75 L1009.10,686.75 L1010.10,685.60 L1011.10,684.36 L1012.10,683.18 L1013.10,682.20 L1014.10,681.51 L1015.10,681.09 L1016.10,680.88 L1017.10,680.80 L1018.10,680.82 L1019.10,680.89 L1020.10,681.00 L1021.10,681.15 L1022.10,681.32 L1023.10,681.50 L1024.10,681.70 L1025.10,681.90 L1026.10,682.12 L1027.10,682.36 L1028.10,682.64 L1029.10,682.97 L1030.10,683.33 L1031.10,683.70 L1032.10,684.07 L1033.10,684.41 L1034.10,684.71 L1035.10,684.94 L1036.10,685.11 L1037.10,685.22 L1038.10,685.28 L1039.10,685.30 L1040.10,685.29 L1041.10,685.27 L1042.10,685.23 L1043.10,685.19 L1044.10,685.14 L1045.10,685.10 L1046.10,685.07 L1047.10,685.05 L1048.10,685.06 L1049.10,685.11 L1050.10,685.23 L1051.10,685.44 L1052.10,685.78 L1053.10,686.26 L1054.10,686.87 L1055.10,687.56 L1056.10,688.23 L1057.10,688.83 L1058.10,689.36 L1059.10,689.83 L1060.10,690.26 L1061.10,690.65 L1062.10,691.00 L1063.10,691.30 L1064.10,691.57 L1065.10,691.79 L1066.10,691.97 L1067.10,692.13 L1068.10,692.26 L1069.10,692.38 L1070.10,692.48 L1071.10,692.57 L1072.10,692.64 L1073,721 L730.1,721 Z" fill="url(#gc)"/>
<line x1="730.5" y1="630" x2="730.5" y2="721" stroke="#6b7280"/>
<line x1="730.5" y1="721" x2="1073" y2="721" stroke="#6b7280"/>
<path d="M730.10,695.84 L731.10,695.08 L732.10,694.12 L733.10,693.12 L734.10,692.18 L735.10,691.35 L736.10,690.63 L737.10,690.00 L738.10,689.47 L739.10,689.02 L740.10,688.68 L741.10,688.45 L742.10,688.33 L743.10,688.29 L744.10,688.32 L745.10,688.40 L746.10,688.51 L747.10,688.66 L748.10,688.85 L749.10,689.05 L750.10,689.25 L751.10,689.44 L752.10,689.59 L753.10,689.65 L754.10,689.57 L755.10,689.23 L756.10,688.58 L757.10,687.63 L758.10,686.46 L759.10,685.22 L760.10,683.97 L761.10,682.76 L762.10,681.65 L763.10,680.75 L764.10,680.15 L765.10,679.94 L766.10,680.11 L767.10,680.59 L768.10,681.25 L769.10,682.02 L770.10,682.83 L771.10,683.67 L772.10,684.52 L773.10,685.37 L774.10,686.21 L775.10,687.04 L776.10,687.87 L777.10,688.70 L778.10,689.52 L779.10,690.31 L780.10,691.08 L781.10,691.79 L782.10,692.44 L783.10,693.01 L784.10,693.47 L785.10,693.78 L786.10,693.93 L787.10,693.90 L788.10,693.69 L789.10,693.33 L790.10,692.86 L791.10,692.32 L792.10,691.76 L793.10,691.21 L794.10,690.68 L795.10,690.19 L796.10,689.76 L797.10,689.40 L798.10,689.15 L799.10,688.98 L800.10,688.90 L801.10,688.87 L802.10,688.87 L803.10,688.90 L804.10,688.94 L805.10,688.98 L806.10,689.02 L807.10,689.05 L808.10,689.09 L809.10,689.14 L810.10,689.24 L811.10,689.39 L812.10,689.63 L813.10,689.99 L814.10,690.47 L815.10,691.09 L816.10,691.80 L817.10,692.56 L818.10,693.31 L819.10,693.99 L820.10,694.58 L821.10,695.09 L822.10,695.54 L823.10,695.93 L824.10,696.28 L825.10,696.60 L826.10,696.90 L827.10,697.17 L828.10,697.40 L829.10,697.61 L830.10,697.77 L831.10,697.90 L832.10,698.00 L833.10,698.08 L834.10,698.15 L835.10,698.22 L836.10,698.29 L837.10,698.36 L838.10,698.43 L839.10,698.49 L840.10,698.55 L841.10,698.61 L842.10,698.65 L843.10,698.68 L844.10,698.70 L845.10,698.69 L846.10,698.63 L847.10,698.45 L848.10,698.09 L849.10,697.50 L850.10,696.69 L851.10,695.75 L852.10,694.72 L853.10,693.63 L854.10,692.49 L855.10,691.30 L856.10,690.03 L857.10,688.67 L858.10,687.17 L859.10,685.53 L860.10,683.76 L861.10,681.93 L862.10,680.15 L863.10,678.55 L864.10,677.25 L865.10,676.34 L866.10,675.81 L867.10,675.59 L868.10,675.57 L869.10,675.66 L870.10,675.81 L871.10,676.01 L872.10,676.23 L873.10,676.47 L874.10,676.73 L875.10,676.99 L876.10,677.27 L877.10,677.52 L878.10,677.73 L879.10,677.84 L880.10,677.83 L881.10,677.68 L882.10,677.39 L883.10,676.98 L884.10,676.50 L885.10,676.00 L886.10,675.52 L887.10,675.10 L888.10,674.73 L889.10,674.41 L890.10,674.12 L891.10,673.85 L892.10,673.60 L893.10,673.36 L894.10,673.13 L895.10,672.90 L896.10,672.68 L897.10,672.46 L898.10,672.28 L899.10,672.17 L900.10,672.13 L901.10,672.18 L902.10,672.28 L903.10,672.43 L904.10,672.60 L905.10,672.79 L906.10,672.98 L907.10,673.17 L908.10,673.35 L909.10,673.53 L910.10,673.69 L911.10,673.82 L912.10,673.93 L913.10,674.00 L914.10,674.03 L915.10,674.00 L916.10,673.93 L917.10,673.80 L918.10,673.62 L919.10,673.41 L920.10,673.17 L921.10,672.91 L922.10,672.65 L923.10,672.40 L924.10,672.17 L925.10,671.95 L926.10,671.76 L927.10,671.59 L928.10,671.42 L929.10,671.27 L930.10,671.12 L931.10,670.96 L932.10,670.80 L933.10,670.63 L934.10,670.44 L935.10,670.23 L936.10,669.98 L937.10,669.69 L938.10,669.35 L939.10,668.96 L940.10,668.52 L941.10,668.03 L942.10,667.52 L943.10,667.01 L944.10,666.51 L945.10,666.06 L946.10,665.68 L947.10,665.42 L948.10,665.31 L949.10,665.39 L950.10,665.73 L951.10,666.36 L952.10,667.30 L953.10,668.54 L954.10,670.03 L955.10,671.71 L956.10,673.51 L957.10,675.44 L958.10,677.47 L959.10,679.58 L960.10,681.71 L961.10,683.79 L962.10,685.74 L963.10,687.52 L964.10,689.06 L965.10,690.35 L966.10,691.36 L967.10,692.11 L968.10,692.62 L969.10,692.94 L970.10,693.11 L971.10,693.17 L972.10,693.15 L973.10,693.08 L974.10,692.98 L975.10,692.87 L976.10,692.77 L977.10,692.71 L978.10,692.70 L979.10,692.74 L980.10,692.83 L981.10,692.96 L982.10,693.12 L983.10,693.30 L984.10,693.49 L985.10,693.69 L986.10,693.89 L987.10,694.09 L988.10,694.30 L989.10,694.50 L990.10,694.70 L991.10,694.90 L992.10,695.08 L993.10,695.24 L994.10,695.36 L995.10,695.38 L996.10,695.25 L997.10,694.93 L998.10,694.47 L999.10,693.92 L1000.10,693.32 L1001.10,692.71 L1002.10,692.07 L1003.10,691.43 L1004.10,690.76 L1005.10,690.08 L1006.10,689.36 L1007.10,688.60 L1008.10,687.75 L1009.10,686.75 L1010.10,685.60 L1011.10,684.36 L1012.10,683.18 L1013.10,682.20 L1014.10,681.51 L1015.10,681.09 L1016.10,680.88 L1017.10,680.80 L1018.10,680.82 L1019.10,680.89 L1020.10,681.00 L1021.10,681.15 L1022.10,681.32 L1023.10,681.50 L1024.10,681.70 L1025.10,681.90 L1026.10,682.12 L1027.10,682.36 L1028.10,682.64 L1029.10,682.97 L1030.10,683.33 L1031.10,683.70 L1032.10,684.07 L1033.10,684.41 L1034.10,684.71 L1035.10,684.94 L1036.10,685.11 L1037.10,685.22 L1038.10,685.28 L1039.10,685.30 L1040.10,685.29 L1041.10,685.27 L1042.10,685.23 L1043.10,685.19 L1044.10,685.14 L1045.10,685.10 L1046.10,685.07 L1047.10,685.05 L1048.10,685.06 L1049.10,685.11 L1050.10,685.23 L1051.10,685.44 L1052.10,685.78 L1053.10,686.26 L1054.10,686.87 L1055.10,687.56 L1056.10,688.23 L1057.10,688.83 L1058.10,689.36 L1059.10,689.83 L1060.10,690.26 L1061.10,690.65 L1062.10,691.00 L1063.10,691.30 L1064.10,691.57 L1065.10,691.79 L1066.10,691.97 L1067.10,692.13 L1068.10,692.26 L1069.10,692.38 L1070.10,692.48 L1071.10,692.57 L1072.10,692.64" fill="none" stroke="#818cf8" stroke-width="2.2"/>
<line x1="748.4" y1="721" x2="748.4" y2="726" stroke="#6b7280"/>
<text x="748.4" y="735.5" font-size="10.5" fill="#aab1bb" text-anchor="middle" font-weight="400" letter-spacing="-0.45">19:45:55</text>
<line x1="786.4" y1="721" x2="786.4" y2="726" stroke="#6b7280"/>
<text x="786.4" y="735.5" font-size="10.5" fill="#aab1bb" text-anchor="middle" font-weight="400" letter-spacing="-0.45">19:46:00</text>
<line x1="824.5" y1="721" x2="824.5" y2="726" stroke="#6b7280"/>
<text x="824.5" y="735.5" font-size="10.5" fill="#aab1bb" text-anchor="middle" font-weight="400" letter-spacing="-0.45">19:46:05</text>
<line x1="862.2" y1="721" x2="862.2" y2="726" stroke="#6b7280"/>
<text x="862.2" y="735.5" font-size="10.5" fill="#aab1bb" text-anchor="middle" font-weight="400" letter-spacing="-0.45">19:46:10</text>
<line x1="901" y1="721" x2="901" y2="726" stroke="#6b7280"/>
<text x="901" y="735.5" font-size="10.5" fill="#aab1bb" text-anchor="middle" font-weight="400" letter-spacing="-0.45">19:46:15</text>
<line x1="939.4" y1="721" x2="939.4" y2="726" stroke="#6b7280"/>
<text x="939.4" y="735.5" font-size="10.5" fill="#aab1bb" text-anchor="middle" font-weight="400" letter-spacing="-0.45">19:46:20</text>
<line x1="977.7" y1="721" x2="977.7" y2="726" stroke="#6b7280"/>
<text x="977.7" y="735.5" font-size="10.5" fill="#aab1bb" text-anchor="middle" font-weight="400" letter-spacing="-0.45">19:46:25</text>
<line x1="1015.4" y1="721" x2="1015.4" y2="726" stroke="#6b7280"/>
<text x="1015.4" y="735.5" font-size="10.5" fill="#aab1bb" text-anchor="middle" font-weight="400" letter-spacing="-0.45">19:46:30</text>
<line x1="1053.4" y1="721" x2="1053.4" y2="726" stroke="#6b7280"/>
<text x="1053.4" y="735.5" font-size="10.5" fill="#aab1bb" text-anchor="middle" font-weight="400" letter-spacing="-0.45">19:46:35</text>
<text x="885" y="819" font-size="15" fill="#f3f4f6" text-anchor="middle" font-weight="400" letter-spacing="0">Network Usage</text>
<line x1="808" y1="833.5" x2="833" y2="833.5" stroke="#34d399" stroke-width="2"/>
<circle cx="821" cy="833.5" r="5" fill="#5470c6"/>
<text x="838.5" y="836.5" font-size="10.5" fill="#aab1bb" text-anchor="start" font-weight="400" letter-spacing="0">Download</text>
<line x1="898" y1="833.5" x2="923.5" y2="833.5" stroke="#f87171" stroke-width="2"/>
<circle cx="910.7" cy="833.5" r="5" fill="#91cc75"/>
<text x="928" y="836.5" font-size="10.5" fill="#aab1bb" text-anchor="start" font-weight="400" letter-spacing="0">Upload</text>
<line x1="750.5" y1="838.2" x2="1073" y2="838.2" stroke="#3a4455" stroke-dasharray="4 3"/>
<line x1="750.5" y1="850.1" x2="1073" y2="850.1" stroke="#3a4455" stroke-dasharray="4 3"/>
<line x1="750.5" y1="862" x2="1073" y2="862" stroke="#3a4455" stroke-dasharray="4 3"/>
<line x1="750.5" y1="873.9" x2="1073" y2="873.9" stroke="#3a4455" stroke-dasharray="4 3"/>
<line x1="750.5" y1="885.7" x2="1073" y2="885.7" stroke="#3a4455" stroke-dasharray="4 3"/>
<line x1="750.5" y1="897.6" x2="1073" y2="897.6" stroke="#3a4455" stroke-dasharray="4 3"/>
<line x1="750.5" y1="909.5" x2="1073" y2="909.5" stroke="#3a4455" stroke-dasharray="4 3"/>
<line x1="745.5" y1="838.2" x2="750.5" y2="838.2" stroke="#6b7280"/>
<text x="741.5" y="840.8000000000001" font-size="11" fill="#aab1bb" text-anchor="end" font-weight="400" letter-spacing="-0.2">66.8 MB/s</text>
<line x1="745.5" y1="850.1" x2="750.5" y2="850.1" stroke="#6b7280"/>
<text x="741.5" y="852.7" font-size="11" fill="#aab1bb" text-anchor="end" font-weight="400" letter-spacing="-0.2">57.2 MB/s</text>
<line x1="745.5" y1="862" x2="750.5" y2="862" stroke="#6b7280"/>
<text x="741.5" y="864.6" font-size="11" fill="#aab1bb" text-anchor="end" font-weight="400" letter-spacing="-0.2">47.7 MB/s</text>
<line x1="745.5" y1="873.9" x2="750.5" y2="873.9" stroke="#6b7280"/>
<text x="741.5" y="876.5" font-size="11" fill="#aab1bb" text-anchor="end" font-weight="400" letter-spacing="-0.2">38.1 MB/s</text>
<line x1="745.5" y1="885.7" x2="750.5" y2="885.7" stroke="#6b7280"/>
<text x="741.5" y="888.3000000000001" font-size="11" fill="#aab1bb" text-anchor="end" font-weight="400" letter-spacing="-0.2">28.6 MB/s</text>
<line x1="745.5" y1="897.6" x2="750.5" y2="897.6" stroke="#6b7280"/>
<text x="741.5" y="900.2" font-size="11" fill="#aab1bb" text-anchor="end" font-weight="400" letter-spacing="-0.2">19.1 MB/s</text>
<line x1="745.5" y1="909.5" x2="750.5" y2="909.5" stroke="#6b7280"/>
<text x="741.5" y="912.1" font-size="11" fill="#aab1bb" text-anchor="end" font-weight="400" letter-spacing="-0.2">9.5 MB/s</text>
<line x1="745.5" y1="921.4" x2="750.5" y2="921.4" stroke="#6b7280"/>
<text x="741.5" y="924.0" font-size="11" fill="#aab1bb" text-anchor="end" font-weight="400" letter-spacing="-0.2">0 B/s</text>
<path d="M750.60,919.89 L751.60,919.73 L752.60,919.51 L753.60,919.29 L754.60,919.09 L755.60,918.90 L756.60,918.73 L757.60,918.57 L758.60,918.44 L759.60,918.37 L760.60,918.36 L761.60,918.44 L762.60,918.63 L763.60,918.88 L764.60,919.14 L765.60,919.36 L766.60,919.52 L767.60,919.65 L768.60,919.76 L769.60,919.85 L770.60,919.92 L771.60,919.98 L772.60,920.03 L773.60,920.07 L774.60,920.10 L775.60,920.13 L776.60,920.15 L777.60,920.17 L778.60,920.18 L779.60,920.19 L780.60,920.20 L781.60,920.21 L782.60,920.22 L783.60,920.23 L784.60,920.23 L785.60,920.24 L786.60,920.24 L787.60,920.24 L788.60,920.25 L789.60,920.25 L790.60,920.25 L791.60,920.25 L792.60,920.25 L793.60,920.25 L794.60,920.25 L795.60,920.25 L796.60,920.25 L797.60,920.25 L798.60,920.25 L799.60,920.25 L800.60,920.25 L801.60,920.25 L802.60,920.24 L803.60,920.24 L804.60,920.24 L805.60,920.24 L806.60,920.24 L807.60,920.23 L808.60,920.23 L809.60,920.23 L810.60,920.23 L811.60,920.22 L812.60,920.22 L813.60,920.22 L814.60,920.21 L815.60,920.21 L816.60,920.21 L817.60,920.21 L818.60,920.20 L819.60,920.20 L820.60,920.20 L821.60,920.20 L822.60,920.19 L823.60,920.19 L824.60,920.19 L825.60,920.18 L826.60,920.18 L827.60,920.18 L828.60,920.17 L829.60,920.17 L830.60,920.17 L831.60,920.16 L832.60,920.16 L833.60,920.16 L834.60,920.15 L835.60,920.15 L836.60,920.15 L837.60,920.14 L838.60,920.14 L839.60,920.13 L840.60,920.13 L841.60,920.12 L842.60,920.12 L843.60,920.11 L844.60,920.10 L845.60,920.10 L846.60,920.09 L847.60,920.08 L848.60,920.07 L849.60,920.07 L850.60,920.06 L851.60,920.05 L852.60,920.03 L853.60,920.02 L854.60,920.01 L855.60,920.00 L856.60,920.01 L857.60,920.03 L858.60,919.99 L859.60,919.72 L860.60,919.05 L861.60,917.95 L862.60,916.30 L863.60,913.67 L864.60,909.47 L865.60,903.48 L866.60,896.65 L867.60,890.45 L868.60,885.50 L869.60,881.57 L870.60,878.29 L871.60,875.37 L872.60,872.70 L873.60,870.21 L874.60,867.87 L875.60,865.68 L876.60,863.64 L877.60,861.77 L878.60,860.06 L879.60,858.51 L880.60,857.10 L881.60,855.80 L882.60,854.60 L883.60,853.49 L884.60,852.45 L885.60,851.49 L886.60,850.62 L887.60,849.86 L888.60,849.25 L889.60,848.83 L890.60,848.66 L891.60,848.83 L892.60,849.41 L893.60,850.48 L894.60,852.03 L895.60,853.92 L896.60,856.05 L897.60,858.34 L898.60,860.73 L899.60,862.92 L900.60,864.54 L901.60,865.22 L902.60,864.83 L903.60,863.48 L904.60,861.38 L905.60,858.68 L906.60,855.48 L907.60,852.14 L908.60,849.21 L909.60,847.11 L910.60,845.89 L911.60,845.35 L912.60,845.22 L913.60,845.28 L914.60,845.42 L915.60,845.61 L916.60,845.87 L917.60,846.18 L918.60,846.53 L919.60,846.87 L920.60,847.19 L921.60,847.45 L922.60,847.63 L923.60,847.71 L924.60,847.67 L925.60,847.51 L926.60,847.26 L927.60,846.94 L928.60,846.56 L929.60,846.15 L930.60,845.74 L931.60,845.35 L932.60,844.99 L933.60,844.66 L934.60,844.36 L935.60,844.07 L936.60,843.78 L937.60,843.50 L938.60,843.23 L939.60,842.97 L940.60,842.72 L941.60,842.48 L942.60,842.27 L943.60,842.08 L944.60,841.91 L945.60,841.78 L946.60,841.72 L947.60,841.81 L948.60,842.14 L949.60,842.73 L950.60,843.58 L951.60,844.68 L952.60,846.01 L953.60,847.58 L954.60,849.36 L955.60,851.37 L956.60,853.60 L957.60,856.05 L958.60,858.73 L959.60,861.65 L960.60,864.80 L961.60,868.20 L962.60,871.81 L963.60,875.60 L964.60,879.59 L965.60,883.82 L966.60,888.34 L967.60,893.03 L968.60,897.61 L969.60,901.80 L970.60,905.50 L971.60,908.67 L972.60,911.32 L973.60,913.46 L974.60,915.16 L975.60,916.49 L976.60,917.52 L977.60,918.32 L978.60,918.95 L979.60,919.42 L980.60,919.77 L981.60,920.01 L982.60,920.18 L983.60,920.29 L984.60,920.37 L985.60,920.43 L986.60,920.49 L987.60,920.53 L988.60,920.55 L989.60,920.56 L990.60,920.54 L991.60,920.52 L992.60,920.49 L993.60,920.46 L994.60,920.44 L995.60,920.43 L996.60,920.42 L997.60,920.41 L998.60,920.40 L999.60,920.40 L1000.60,920.40 L1001.60,920.40 L1002.60,920.41 L1003.60,920.41 L1004.60,920.41 L1005.60,920.42 L1006.60,920.42 L1007.60,920.43 L1008.60,920.43 L1009.60,920.44 L1010.60,920.44 L1011.60,920.44 L1012.60,920.45 L1013.60,920.45 L1014.60,920.46 L1015.60,920.46 L1016.60,920.47 L1017.60,920.48 L1018.60,920.48 L1019.60,920.49 L1020.60,920.49 L1021.60,920.50 L1022.60,920.50 L1023.60,920.51 L1024.60,920.51 L1025.60,920.52 L1026.60,920.52 L1027.60,920.53 L1028.60,920.54 L1029.60,920.54 L1030.60,920.55 L1031.60,920.55 L1032.60,920.56 L1033.60,920.56 L1034.60,920.57 L1035.60,920.58 L1036.60,920.58 L1037.60,920.59 L1038.60,920.59 L1039.60,920.60 L1040.60,920.60 L1041.60,920.61 L1042.60,920.61 L1043.60,920.62 L1044.60,920.63 L1045.60,920.63 L1046.60,920.64 L1047.60,920.64 L1048.60,920.65 L1049.60,920.66 L1050.60,920.66 L1051.60,920.67 L1052.60,920.67 L1053.60,920.68 L1054.60,920.69 L1055.60,920.69 L1056.60,920.70 L1057.60,920.70 L1058.60,920.71 L1059.60,920.72 L1060.60,920.72 L1061.60,920.73 L1062.60,920.73 L1063.60,920.74 L1064.60,920.75 L1065.60,920.75 L1066.60,920.76 L1067.60,920.77 L1068.60,920.77 L1069.60,920.78 L1070.60,920.79 L1071.60,920.79 L1072.60,920.79 L1073,921.4 L750.6,921.4 Z" fill="url(#gd)"/>
<path d="M750.60,920.60 L751.60,920.60 L752.60,920.59 L753.60,920.59 L754.60,920.58 L755.60,920.58 L756.60,920.57 L757.60,920.57 L758.60,920.56 L759.60,920.56 L760.60,920.56 L761.60,920.55 L762.60,920.55 L763.60,920.54 L764.60,920.54 L765.60,920.53 L766.60,920.53 L767.60,920.52 L768.60,920.52 L769.60,920.52 L770.60,920.51 L771.60,920.51 L772.60,920.50 L773.60,920.50 L774.60,920.49 L775.60,920.49 L776.60,920.49 L777.60,920.48 L778.60,920.48 L779.60,920.47 L780.60,920.47 L781.60,920.47 L782.60,920.46 L783.60,920.46 L784.60,920.45 L785.60,920.45 L786.60,920.45 L787.60,920.44 L788.60,920.44 L789.60,920.44 L790.60,920.43 L791.60,920.43 L792.60,920.42 L793.60,920.42 L794.60,920.42 L795.60,920.41 L796.60,920.41 L797.60,920.41 L798.60,920.40 L799.60,920.40 L800.60,920.40 L801.60,920.40 L802.60,920.39 L803.60,920.39 L804.60,920.39 L805.60,920.39 L806.60,920.39 L807.60,920.39 L808.60,920.39 L809.60,920.39 L810.60,920.38 L811.60,920.38 L812.60,920.38 L813.60,920.38 L814.60,920.38 L815.60,920.38 L816.60,920.38 L817.60,920.38 L818.60,920.39 L819.60,920.39 L820.60,920.39 L821.60,920.39 L822.60,920.39 L823.60,920.39 L824.60,920.39 L825.60,920.39 L826.60,920.39 L827.60,920.39 L828.60,920.39 L829.60,920.39 L830.60,920.39 L831.60,920.39 L832.60,920.39 L833.60,920.39 L834.60,920.39 L835.60,920.39 L836.60,920.39 L837.60,920.39 L838.60,920.39 L839.60,920.39 L840.60,920.39 L841.60,920.39 L842.60,920.39 L843.60,920.39 L844.60,920.39 L845.60,920.39 L846.60,920.39 L847.60,920.39 L848.60,920.39 L849.60,920.39 L850.60,920.38 L851.60,920.38 L852.60,920.38 L853.60,920.38 L854.60,920.38 L855.60,920.37 L856.60,920.37 L857.60,920.37 L858.60,920.36 L859.60,920.36 L860.60,920.36 L861.60,920.35 L862.60,920.35 L863.60,920.34 L864.60,920.34 L865.60,920.33 L866.60,920.33 L867.60,920.32 L868.60,920.31 L869.60,920.31 L870.60,920.30 L871.60,920.29 L872.60,920.28 L873.60,920.27 L874.60,920.26 L875.60,920.25 L876.60,920.24 L877.60,920.23 L878.60,920.22 L879.60,920.20 L880.60,920.19 L881.60,920.17 L882.60,920.16 L883.60,920.14 L884.60,920.12 L885.60,920.10 L886.60,920.08 L887.60,920.06 L888.60,920.03 L889.60,920.01 L890.60,919.98 L891.60,919.96 L892.60,919.93 L893.60,919.90 L894.60,919.87 L895.60,919.84 L896.60,919.81 L897.60,919.78 L898.60,919.74 L899.60,919.71 L900.60,919.68 L901.60,919.64 L902.60,919.61 L903.60,919.57 L904.60,919.53 L905.60,919.49 L906.60,919.46 L907.60,919.42 L908.60,919.38 L909.60,919.34 L910.60,919.30 L911.60,919.26 L912.60,919.22 L913.60,919.18 L914.60,919.14 L915.60,919.10 L916.60,919.06 L917.60,919.02 L918.60,918.98 L919.60,918.94 L920.60,918.90 L921.60,918.86 L922.60,918.82 L923.60,918.79 L924.60,918.75 L925.60,918.71 L926.60,918.68 L927.60,918.65 L928.60,918.62 L929.60,918.59 L930.60,918.56 L931.60,918.54 L932.60,918.52 L933.60,918.50 L934.60,918.48 L935.60,918.47 L936.60,918.46 L937.60,918.45 L938.60,918.45 L939.60,918.44 L940.60,918.45 L941.60,918.46 L942.60,918.47 L943.60,918.49 L944.60,918.52 L945.60,918.55 L946.60,918.60 L947.60,918.65 L948.60,918.71 L949.60,918.77 L950.60,918.84 L951.60,918.90 L952.60,918.96 L953.60,919.01 L954.60,919.08 L955.60,919.14 L956.60,919.22 L957.60,919.30 L958.60,919.39 L959.60,919.48 L960.60,919.58 L961.60,919.68 L962.60,919.78 L963.60,919.87 L964.60,919.97 L965.60,920.06 L966.60,920.15 L967.60,920.24 L968.60,920.32 L969.60,920.39 L970.60,920.46 L971.60,920.51 L972.60,920.56 L973.60,920.60 L974.60,920.64 L975.60,920.68 L976.60,920.72 L977.60,920.75 L978.60,920.79 L979.60,920.82 L980.60,920.85 L981.60,920.88 L982.60,920.91 L983.60,920.93 L984.60,920.95 L985.60,920.97 L986.60,920.99 L987.60,921.00 L988.60,921.00 L989.60,921.00 L990.60,920.99 L991.60,920.98 L992.60,920.96 L993.60,920.92 L994.60,920.86 L995.60,920.79 L996.60,920.68 L997.60,920.52 L998.60,920.21 L999.60,919.50 L1000.60,917.90 L1001.60,915.21 L1002.60,911.80 L1003.60,908.27 L1004.60,905.17 L1005.60,902.76 L1006.60,900.93 L1007.60,899.46 L1008.60,898.20 L1009.60,897.05 L1010.60,896.00 L1011.60,895.02 L1012.60,894.14 L1013.60,893.36 L1014.60,892.74 L1015.60,892.31 L1016.60,892.07 L1017.60,892.00 L1018.60,892.05 L1019.60,892.22 L1020.60,892.51 L1021.60,892.89 L1022.60,893.33 L1023.60,893.78 L1024.60,894.23 L1025.60,894.69 L1026.60,895.14 L1027.60,895.52 L1028.60,895.77 L1029.60,895.83 L1030.60,895.70 L1031.60,895.40 L1032.60,894.99 L1033.60,894.54 L1034.60,894.08 L1035.60,893.62 L1036.60,893.15 L1037.60,892.72 L1038.60,892.38 L1039.60,892.13 L1040.60,891.97 L1041.60,891.86 L1042.60,891.79 L1043.60,891.73 L1044.60,891.68 L1045.60,891.64 L1046.60,891.62 L1047.60,891.60 L1048.60,891.60 L1049.60,891.61 L1050.60,891.63 L1051.60,891.67 L1052.60,891.82 L1053.60,892.46 L1054.60,894.19 L1055.60,897.33 L1056.60,901.44 L1057.60,905.64 L1058.60,909.06 L1059.60,911.28 L1060.60,912.36 L1061.60,912.70 L1062.60,912.65 L1063.60,912.41 L1064.60,911.99 L1065.60,911.44 L1066.60,910.83 L1067.60,910.20 L1068.60,909.57 L1069.60,908.93 L1070.60,908.29 L1071.60,907.69 L1072.60,907.25 L1073,921.4 L750.6,921.4 Z" fill="url(#gu)"/>
<line x1="750.5" y1="838" x2="750.5" y2="921.4" stroke="#6b7280"/>
<line x1="750.5" y1="921.4" x2="1073" y2="921.4" stroke="#6b7280"/>
<path d="M750.60,919.89 L751.60,919.73 L752.60,919.51 L753.60,919.29 L754.60,919.09 L755.60,918.90 L756.60,918.73 L757.60,918.57 L758.60,918.44 L759.60,918.37 L760.60,918.36 L761.60,918.44 L762.60,918.63 L763.60,918.88 L764.60,919.14 L765.60,919.36 L766.60,919.52 L767.60,919.65 L768.60,919.76 L769.60,919.85 L770.60,919.92 L771.60,919.98 L772.60,920.03 L773.60,920.07 L774.60,920.10 L775.60,920.13 L776.60,920.15 L777.60,920.17 L778.60,920.18 L779.60,920.19 L780.60,920.20 L781.60,920.21 L782.60,920.22 L783.60,920.23 L784.60,920.23 L785.60,920.24 L786.60,920.24 L787.60,920.24 L788.60,920.25 L789.60,920.25 L790.60,920.25 L791.60,920.25 L792.60,920.25 L793.60,920.25 L794.60,920.25 L795.60,920.25 L796.60,920.25 L797.60,920.25 L798.60,920.25 L799.60,920.25 L800.60,920.25 L801.60,920.25 L802.60,920.24 L803.60,920.24 L804.60,920.24 L805.60,920.24 L806.60,920.24 L807.60,920.23 L808.60,920.23 L809.60,920.23 L810.60,920.23 L811.60,920.22 L812.60,920.22 L813.60,920.22 L814.60,920.21 L815.60,920.21 L816.60,920.21 L817.60,920.21 L818.60,920.20 L819.60,920.20 L820.60,920.20 L821.60,920.20 L822.60,920.19 L823.60,920.19 L824.60,920.19 L825.60,920.18 L826.60,920.18 L827.60,920.18 L828.60,920.17 L829.60,920.17 L830.60,920.17 L831.60,920.16 L832.60,920.16 L833.60,920.16 L834.60,920.15 L835.60,920.15 L836.60,920.15 L837.60,920.14 L838.60,920.14 L839.60,920.13 L840.60,920.13 L841.60,920.12 L842.60,920.12 L843.60,920.11 L844.60,920.10 L845.60,920.10 L846.60,920.09 L847.60,920.08 L848.60,920.07 L849.60,920.07 L850.60,920.06 L851.60,920.05 L852.60,920.03 L853.60,920.02 L854.60,920.01 L855.60,920.00 L856.60,920.01 L857.60,920.03 L858.60,919.99 L859.60,919.72 L860.60,919.05 L861.60,917.95 L862.60,916.30 L863.60,913.67 L864.60,909.47 L865.60,903.48 L866.60,896.65 L867.60,890.45 L868.60,885.50 L869.60,881.57 L870.60,878.29 L871.60,875.37 L872.60,872.70 L873.60,870.21 L874.60,867.87 L875.60,865.68 L876.60,863.64 L877.60,861.77 L878.60,860.06 L879.60,858.51 L880.60,857.10 L881.60,855.80 L882.60,854.60 L883.60,853.49 L884.60,852.45 L885.60,851.49 L886.60,850.62 L887.60,849.86 L888.60,849.25 L889.60,848.83 L890.60,848.66 L891.60,848.83 L892.60,849.41 L893.60,850.48 L894.60,852.03 L895.60,853.92 L896.60,856.05 L897.60,858.34 L898.60,860.73 L899.60,862.92 L900.60,864.54 L901.60,865.22 L902.60,864.83 L903.60,863.48 L904.60,861.38 L905.60,858.68 L906.60,855.48 L907.60,852.14 L908.60,849.21 L909.60,847.11 L910.60,845.89 L911.60,845.35 L912.60,845.22 L913.60,845.28 L914.60,845.42 L915.60,845.61 L916.60,845.87 L917.60,846.18 L918.60,846.53 L919.60,846.87 L920.60,847.19 L921.60,847.45 L922.60,847.63 L923.60,847.71 L924.60,847.67 L925.60,847.51 L926.60,847.26 L927.60,846.94 L928.60,846.56 L929.60,846.15 L930.60,845.74 L931.60,845.35 L932.60,844.99 L933.60,844.66 L934.60,844.36 L935.60,844.07 L936.60,843.78 L937.60,843.50 L938.60,843.23 L939.60,842.97 L940.60,842.72 L941.60,842.48 L942.60,842.27 L943.60,842.08 L944.60,841.91 L945.60,841.78 L946.60,841.72 L947.60,841.81 L948.60,842.14 L949.60,842.73 L950.60,843.58 L951.60,844.68 L952.60,846.01 L953.60,847.58 L954.60,849.36 L955.60,851.37 L956.60,853.60 L957.60,856.05 L958.60,858.73 L959.60,861.65 L960.60,864.80 L961.60,868.20 L962.60,871.81 L963.60,875.60 L964.60,879.59 L965.60,883.82 L966.60,888.34 L967.60,893.03 L968.60,897.61 L969.60,901.80 L970.60,905.50 L971.60,908.67 L972.60,911.32 L973.60,913.46 L974.60,915.16 L975.60,916.49 L976.60,917.52 L977.60,918.32 L978.60,918.95 L979.60,919.42 L980.60,919.77 L981.60,920.01 L982.60,920.18 L983.60,920.29 L984.60,920.37 L985.60,920.43 L986.60,920.49 L987.60,920.53 L988.60,920.55 L989.60,920.56 L990.60,920.54 L991.60,920.52 L992.60,920.49 L993.60,920.46 L994.60,920.44 L995.60,920.43 L996.60,920.42 L997.60,920.41 L998.60,920.40 L999.60,920.40 L1000.60,920.40 L1001.60,920.40 L1002.60,920.41 L1003.60,920.41 L1004.60,920.41 L1005.60,920.42 L1006.60,920.42 L1007.60,920.43 L1008.60,920.43 L1009.60,920.44 L1010.60,920.44 L1011.60,920.44 L1012.60,920.45 L1013.60,920.45 L1014.60,920.46 L1015.60,920.46 L1016.60,920.47 L1017.60,920.48 L1018.60,920.48 L1019.60,920.49 L1020.60,920.49 L1021.60,920.50 L1022.60,920.50 L1023.60,920.51 L1024.60,920.51 L1025.60,920.52 L1026.60,920.52 L1027.60,920.53 L1028.60,920.54 L1029.60,920.54 L1030.60,920.55 L1031.60,920.55 L1032.60,920.56 L1033.60,920.56 L1034.60,920.57 L1035.60,920.58 L1036.60,920.58 L1037.60,920.59 L1038.60,920.59 L1039.60,920.60 L1040.60,920.60 L1041.60,920.61 L1042.60,920.61 L1043.60,920.62 L1044.60,920.63 L1045.60,920.63 L1046.60,920.64 L1047.60,920.64 L1048.60,920.65 L1049.60,920.66 L1050.60,920.66 L1051.60,920.67 L1052.60,920.67 L1053.60,920.68 L1054.60,920.69 L1055.60,920.69 L1056.60,920.70 L1057.60,920.70 L1058.60,920.71 L1059.60,920.72 L1060.60,920.72 L1061.60,920.73 L1062.60,920.73 L1063.60,920.74 L1064.60,920.75 L1065.60,920.75 L1066.60,920.76 L1067.60,920.77 L1068.60,920.77 L1069.60,920.78 L1070.60,920.79 L1071.60,920.79 L1072.60,920.79" fill="none" stroke="#34d399" stroke-width="2.2"/>
<path d="M750.60,920.60 L751.60,920.60 L752.60,920.59 L753.60,920.59 L754.60,920.58 L755.60,920.58 L756.60,920.57 L757.60,920.57 L758.60,920.56 L759.60,920.56 L760.60,920.56 L761.60,920.55 L762.60,920.55 L763.60,920.54 L764.60,920.54 L765.60,920.53 L766.60,920.53 L767.60,920.52 L768.60,920.52 L769.60,920.52 L770.60,920.51 L771.60,920.51 L772.60,920.50 L773.60,920.50 L774.60,920.49 L775.60,920.49 L776.60,920.49 L777.60,920.48 L778.60,920.48 L779.60,920.47 L780.60,920.47 L781.60,920.47 L782.60,920.46 L783.60,920.46 L784.60,920.45 L785.60,920.45 L786.60,920.45 L787.60,920.44 L788.60,920.44 L789.60,920.44 L790.60,920.43 L791.60,920.43 L792.60,920.42 L793.60,920.42 L794.60,920.42 L795.60,920.41 L796.60,920.41 L797.60,920.41 L798.60,920.40 L799.60,920.40 L800.60,920.40 L801.60,920.40 L802.60,920.39 L803.60,920.39 L804.60,920.39 L805.60,920.39 L806.60,920.39 L807.60,920.39 L808.60,920.39 L809.60,920.39 L810.60,920.38 L811.60,920.38 L812.60,920.38 L813.60,920.38 L814.60,920.38 L815.60,920.38 L816.60,920.38 L817.60,920.38 L818.60,920.39 L819.60,920.39 L820.60,920.39 L821.60,920.39 L822.60,920.39 L823.60,920.39 L824.60,920.39 L825.60,920.39 L826.60,920.39 L827.60,920.39 L828.60,920.39 L829.60,920.39 L830.60,920.39 L831.60,920.39 L832.60,920.39 L833.60,920.39 L834.60,920.39 L835.60,920.39 L836.60,920.39 L837.60,920.39 L838.60,920.39 L839.60,920.39 L840.60,920.39 L841.60,920.39 L842.60,920.39 L843.60,920.39 L844.60,920.39 L845.60,920.39 L846.60,920.39 L847.60,920.39 L848.60,920.39 L849.60,920.39 L850.60,920.38 L851.60,920.38 L852.60,920.38 L853.60,920.38 L854.60,920.38 L855.60,920.37 L856.60,920.37 L857.60,920.37 L858.60,920.36 L859.60,920.36 L860.60,920.36 L861.60,920.35 L862.60,920.35 L863.60,920.34 L864.60,920.34 L865.60,920.33 L866.60,920.33 L867.60,920.32 L868.60,920.31 L869.60,920.31 L870.60,920.30 L871.60,920.29 L872.60,920.28 L873.60,920.27 L874.60,920.26 L875.60,920.25 L876.60,920.24 L877.60,920.23 L878.60,920.22 L879.60,920.20 L880.60,920.19 L881.60,920.17 L882.60,920.16 L883.60,920.14 L884.60,920.12 L885.60,920.10 L886.60,920.08 L887.60,920.06 L888.60,920.03 L889.60,920.01 L890.60,919.98 L891.60,919.96 L892.60,919.93 L893.60,919.90 L894.60,919.87 L895.60,919.84 L896.60,919.81 L897.60,919.78 L898.60,919.74 L899.60,919.71 L900.60,919.68 L901.60,919.64 L902.60,919.61 L903.60,919.57 L904.60,919.53 L905.60,919.49 L906.60,919.46 L907.60,919.42 L908.60,919.38 L909.60,919.34 L910.60,919.30 L911.60,919.26 L912.60,919.22 L913.60,919.18 L914.60,919.14 L915.60,919.10 L916.60,919.06 L917.60,919.02 L918.60,918.98 L919.60,918.94 L920.60,918.90 L921.60,918.86 L922.60,918.82 L923.60,918.79 L924.60,918.75 L925.60,918.71 L926.60,918.68 L927.60,918.65 L928.60,918.62 L929.60,918.59 L930.60,918.56 L931.60,918.54 L932.60,918.52 L933.60,918.50 L934.60,918.48 L935.60,918.47 L936.60,918.46 L937.60,918.45 L938.60,918.45 L939.60,918.44 L940.60,918.45 L941.60,918.46 L942.60,918.47 L943.60,918.49 L944.60,918.52 L945.60,918.55 L946.60,918.60 L947.60,918.65 L948.60,918.71 L949.60,918.77 L950.60,918.84 L951.60,918.90 L952.60,918.96 L953.60,919.01 L954.60,919.08 L955.60,919.14 L956.60,919.22 L957.60,919.30 L958.60,919.39 L959.60,919.48 L960.60,919.58 L961.60,919.68 L962.60,919.78 L963.60,919.87 L964.60,919.97 L965.60,920.06 L966.60,920.15 L967.60,920.24 L968.60,920.32 L969.60,920.39 L970.60,920.46 L971.60,920.51 L972.60,920.56 L973.60,920.60 L974.60,920.64 L975.60,920.68 L976.60,920.72 L977.60,920.75 L978.60,920.79 L979.60,920.82 L980.60,920.85 L981.60,920.88 L982.60,920.91 L983.60,920.93 L984.60,920.95 L985.60,920.97 L986.60,920.99 L987.60,921.00 L988.60,921.00 L989.60,921.00 L990.60,920.99 L991.60,920.98 L992.60,920.96 L993.60,920.92 L994.60,920.86 L995.60,920.79 L996.60,920.68 L997.60,920.52 L998.60,920.21 L999.60,919.50 L1000.60,917.90 L1001.60,915.21 L1002.60,911.80 L1003.60,908.27 L1004.60,905.17 L1005.60,902.76 L1006.60,900.93 L1007.60,899.46 L1008.60,898.20 L1009.60,897.05 L1010.60,896.00 L1011.60,895.02 L1012.60,894.14 L1013.60,893.36 L1014.60,892.74 L1015.60,892.31 L1016.60,892.07 L1017.60,892.00 L1018.60,892.05 L1019.60,892.22 L1020.60,892.51 L1021.60,892.89 L1022.60,893.33 L1023.60,893.78 L1024.60,894.23 L1025.60,894.69 L1026.60,895.14 L1027.60,895.52 L1028.60,895.77 L1029.60,895.83 L1030.60,895.70 L1031.60,895.40 L1032.60,894.99 L1033.60,894.54 L1034.60,894.08 L1035.60,893.62 L1036.60,893.15 L1037.60,892.72 L1038.60,892.38 L1039.60,892.13 L1040.60,891.97 L1041.60,891.86 L1042.60,891.79 L1043.60,891.73 L1044.60,891.68 L1045.60,891.64 L1046.60,891.62 L1047.60,891.60 L1048.60,891.60 L1049.60,891.61 L1050.60,891.63 L1051.60,891.67 L1052.60,891.82 L1053.60,892.46 L1054.60,894.19 L1055.60,897.33 L1056.60,901.44 L1057.60,905.64 L1058.60,909.06 L1059.60,911.28 L1060.60,912.36 L1061.60,912.70 L1062.60,912.65 L1063.60,912.41 L1064.60,911.99 L1065.60,911.44 L1066.60,910.83 L1067.60,910.20 L1068.60,909.57 L1069.60,908.93 L1070.60,908.29 L1071.60,907.69 L1072.60,907.25" fill="none" stroke="#f87171" stroke-width="2.2"/>
<line x1="767.4" y1="921.4" x2="767.4" y2="926.4" stroke="#6b7280"/>
<text x="767.4" y="935.5" font-size="10.5" fill="#aab1bb" text-anchor="middle" font-weight="400" letter-spacing="-0.45">19:45:55</text>
<line x1="803.3" y1="921.4" x2="803.3" y2="926.4" stroke="#6b7280"/>
<text x="803.3" y="935.5" font-size="10.5" fill="#aab1bb" text-anchor="middle" font-weight="400" letter-spacing="-0.45">19:46:00</text>
<line x1="839.3" y1="921.4" x2="839.3" y2="926.4" stroke="#6b7280"/>
<text x="839.3" y="935.5" font-size="10.5" fill="#aab1bb" text-anchor="middle" font-weight="400" letter-spacing="-0.45">19:46:05</text>
<line x1="874.3" y1="921.4" x2="874.3" y2="926.4" stroke="#6b7280"/>
<text x="874.3" y="935.5" font-size="10.5" fill="#aab1bb" text-anchor="middle" font-weight="400" letter-spacing="-0.45">19:46:10</text>
<line x1="910.4" y1="921.4" x2="910.4" y2="926.4" stroke="#6b7280"/>
<text x="910.4" y="935.5" font-size="10.5" fill="#aab1bb" text-anchor="middle" font-weight="400" letter-spacing="-0.45">19:46:15</text>
<line x1="946.3" y1="921.4" x2="946.3" y2="926.4" stroke="#6b7280"/>
<text x="946.3" y="935.5" font-size="10.5" fill="#aab1bb" text-anchor="middle" font-weight="400" letter-spacing="-0.45">19:46:20</text>
<line x1="982.5" y1="921.4" x2="982.5" y2="926.4" stroke="#6b7280"/>
<text x="982.5" y="935.5" font-size="10.5" fill="#aab1bb" text-anchor="middle" font-weight="400" letter-spacing="-0.45">19:46:25</text>
<line x1="1018.8" y1="921.4" x2="1018.8" y2="926.4" stroke="#6b7280"/>
<text x="1018.8" y="935.5" font-size="10.5" fill="#aab1bb" text-anchor="middle" font-weight="400" letter-spacing="-0.45">19:46:30</text>
<line x1="1054.5" y1="921.4" x2="1054.5" y2="926.4" stroke="#6b7280"/>
<text x="1054.5" y="935.5" font-size="10.5" fill="#aab1bb" text-anchor="middle" font-weight="400" letter-spacing="-0.45">19:46:35</text>
</svg>
</body></html>
